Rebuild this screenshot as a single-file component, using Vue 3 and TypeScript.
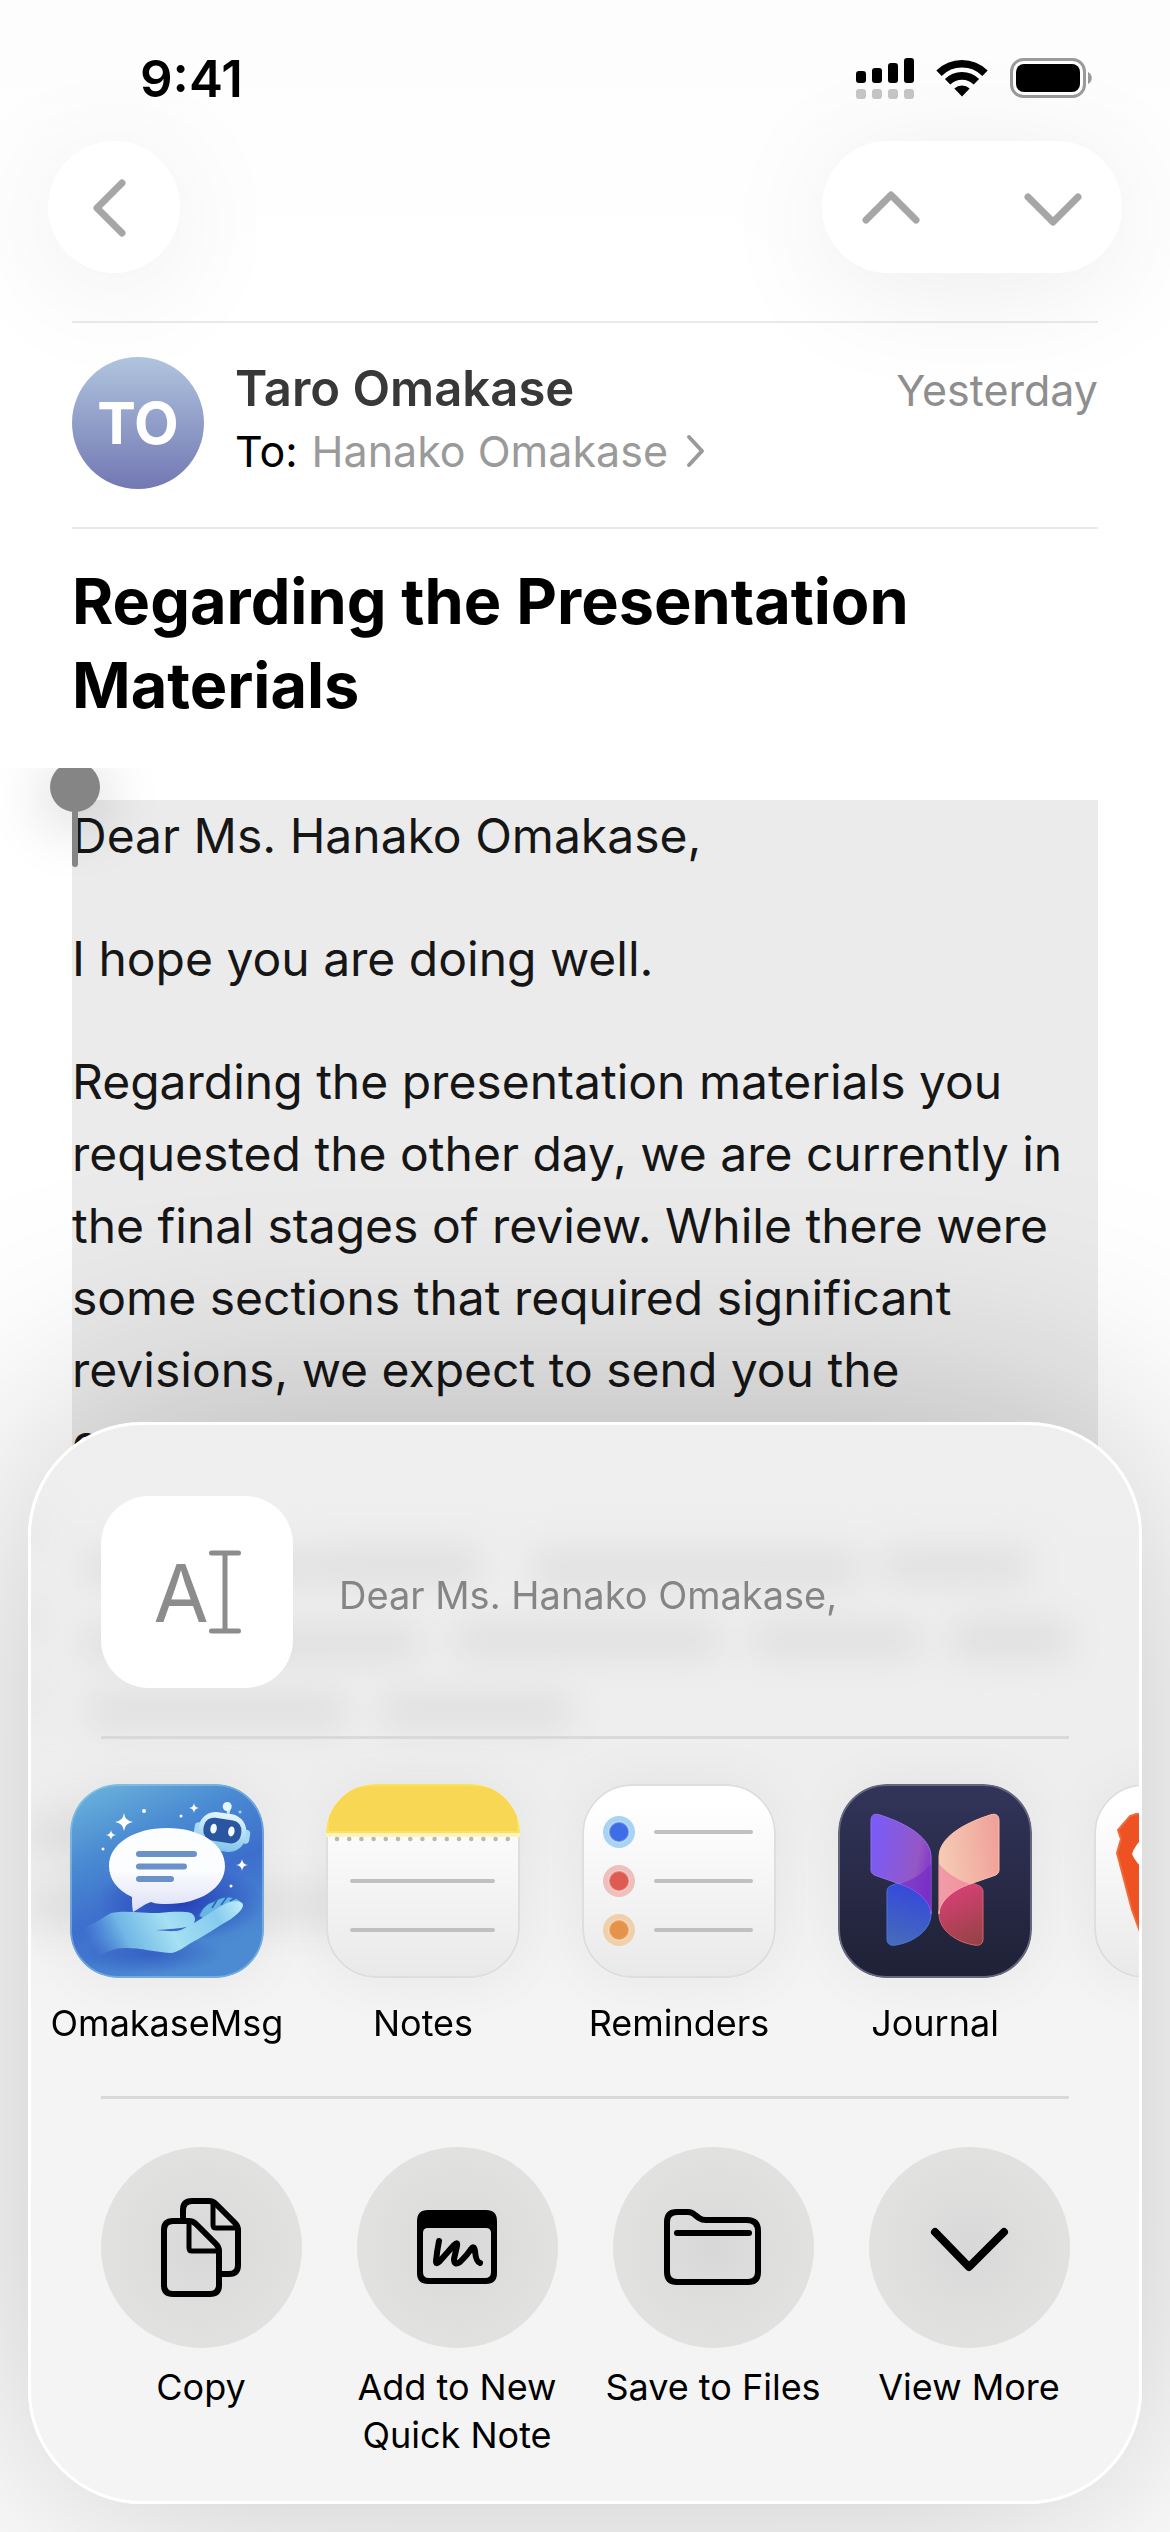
<script setup lang="ts">
type AppId = 'omakase' | 'notes' | 'reminders' | 'journal' | 'brave'
type ActionId = 'copy' | 'quicknote' | 'files' | 'more'

interface ShareApp {
  id: AppId
  label: string
}

interface ShareAction {
  id: ActionId
  label: string
}

const apps: ShareApp[] = [
  { id: 'omakase', label: 'OmakaseMsg' },
  { id: 'notes', label: 'Notes' },
  { id: 'reminders', label: 'Reminders' },
  { id: 'journal', label: 'Journal' },
  { id: 'brave', label: '' },
]

const actions: ShareAction[] = [
  { id: 'copy', label: 'Copy' },
  { id: 'quicknote', label: 'Add to New Quick Note' },
  { id: 'files', label: 'Save to Files' },
  { id: 'more', label: 'View More' },
]

const perforations: number[] = Array.from({ length: 15 }, (_, i) => 11 + i * 12.2)

const reminderRows = [
  { y: 48, halo: '#a9d3f5', core: '#3f6de8' },
  { y: 97, halo: '#efbfbd', core: '#dd5b50' },
  { y: 146, halo: '#efd0aa', core: '#e5924a' },
]
</script>

<template>
  <div class="screen">
    <header class="status">
      <span class="time">9:41</span>
      <div class="indicators">
        <svg width="58" height="41" viewBox="0 0 58 41" aria-hidden="true">
          <g fill="#000">
            <rect x="0" y="13" width="10" height="12" rx="3" />
            <rect x="16" y="10" width="10" height="15" rx="3" />
            <rect x="32" y="5" width="10" height="20" rx="3" />
            <rect x="48" y="0" width="10" height="25" rx="3" />
          </g>
          <g fill="#c6c6c6">
            <rect v-for="i in 4" :key="i" :x="(i - 1) * 16" y="31" width="10" height="10" rx="3" />
          </g>
        </svg>
        <svg width="52" height="38" viewBox="0 0 52 38" aria-hidden="true">
          <g fill="none" stroke="#000" stroke-width="7.6">
            <path d="M3 14.2A32.6 32.6 0 0 1 49 14.2" />
            <path d="M11.6 22.8A20.4 20.4 0 0 1 40.4 22.8" />
          </g>
          <path d="M26 37.5L18.3 29.6A11.2 11.2 0 0 1 33.7 29.6Z" fill="#000" />
        </svg>
        <svg class="battery" width="83" height="40" viewBox="0 0 83 40" aria-hidden="true">
          <rect x="1.5" y="1.5" width="73" height="37" rx="12" fill="none" stroke="#9a9a9a" stroke-width="3" />
          <rect x="6" y="6" width="64" height="28" rx="8" fill="#000" />
          <path d="M78 14c5 2 5 10 0 12z" fill="#9a9a9a" />
        </svg>
      </div>
    </header>

    <nav class="toolbar">
      <button class="round" type="button" aria-label="Back">
        <svg width="132" height="132" viewBox="0 0 132 132"><path d="M74 42L49 67L74 92" /></svg>
      </button>
      <div class="pill">
        <button type="button" aria-label="Previous message">
          <svg width="138" height="132" viewBox="0 0 138 132"><path d="M44 79L69 54L94 79" /></svg>
        </button>
        <button type="button" aria-label="Next message">
          <svg width="138" height="132" viewBox="0 0 138 132"><path d="M44 56L69 81L94 56" /></svg>
        </button>
      </div>
    </nav>

    <main class="mail">
      <section class="sender">
        <div class="avatar">TO</div>
        <div class="who">
          <div class="row">
            <span class="name">Taro Omakase</span>
            <span class="date">Yesterday</span>
          </div>
          <a class="to" href="#">
            <span class="to-label">To:</span>
            <span>Hanako Omakase</span>
            <svg width="26" height="34" viewBox="0 0 26 34" aria-hidden="true">
              <path d="M7 3L20 17L7 31" fill="none" stroke="#9a9a9a" stroke-width="4" stroke-linecap="round" stroke-linejoin="round" />
            </svg>
          </a>
        </div>
      </section>

      <h1>Regarding the Presentation Materials</h1>

      <div class="viewport">
        <article class="selection">
          <p>Dear Ms. Hanako Omakase,</p>
          <p>I hope you are doing well.</p>
          <p>
            Regarding the presentation materials you<br />
            requested the other day, we are currently in<br />
            the final stages of review. While there were<br />
            some sections that required significant<br />
            revisions, we expect to send you the<br />
            completed version by tomorrow
          </p>
          <span class="handle" aria-hidden="true"></span>
        </article>
      </div>
    </main>

    <section class="sheet" aria-label="Share">
      <svg class="glass" viewBox="0 0 1108 700" aria-hidden="true">
        <defs>
          <filter id="soft" x="-10%" y="-10%" width="120%" height="120%"><feGaussianBlur stdDeviation="17" /></filter>
        </defs>
        <g filter="url(#soft)" fill="#dfdfdf">
          <rect x="50" y="126" width="240" height="34" rx="12" />
          <rect x="290" y="122" width="160" height="38" rx="12" />
          <rect x="500" y="126" width="330" height="36" rx="12" />
          <rect x="850" y="124" width="150" height="34" rx="12" />
          <rect x="50" y="200" width="340" height="36" rx="12" />
          <rect x="420" y="198" width="270" height="34" rx="12" />
          <rect x="720" y="198" width="170" height="34" rx="12" />
          <rect x="920" y="194" width="120" height="40" rx="12" />
          <rect x="56" y="268" width="260" height="36" rx="12" />
          <rect x="350" y="268" width="190" height="36" rx="12" />
          <rect x="-10" y="90" width="22" height="40" opacity="0.6" />
          <rect x="-10" y="170" width="24" height="50" opacity="0.6" />
          <rect x="-10" y="250" width="22" height="40" opacity="0.6" />
          <rect x="-10" y="390" width="80" height="40" opacity="0.8" />
          <rect x="-10" y="460" width="340" height="40" opacity="0.8" />
        </g>
      </svg>

      <div class="preview">
        <div class="thumb">
          <span>A</span>
          <svg width="32" height="84" viewBox="0 0 32 84" aria-hidden="true">
            <path d="M2.500 3H29.500M2.500 81H29.500M16 3V81" fill="none" stroke="#8c8c8c" stroke-width="5" stroke-linecap="round" />
          </svg>
        </div>
        <span class="excerpt">Dear Ms. Hanako Omakase,</span>
      </div>

      <hr />

      <div class="apps">
        <button v-for="app in apps" :key="app.id" class="app" type="button" :aria-label="app.label || 'Brave'">
          <svg v-if="app.id === 'omakase'" class="icon" viewBox="0 0 194 194">
            <defs>
              <linearGradient id="sky" x1="0" y1="0" x2="0.45" y2="1">
                <stop offset="0" stop-color="#6fb8dc" />
                <stop offset="0.35" stop-color="#4a8bd2" />
                <stop offset="0.65" stop-color="#3d6ecd" />
                <stop offset="1" stop-color="#4c8bd2" />
              </linearGradient>
              <linearGradient id="hand" x1="0" y1="0.2" x2="1" y2="0">
                <stop offset="0" stop-color="#5f9fe0" stop-opacity="0" />
                <stop offset="0.22" stop-color="#70b7e6" />
                <stop offset="0.5" stop-color="#a5e0f3" />
                <stop offset="0.8" stop-color="#86cbee" />
                <stop offset="1" stop-color="#c4effa" />
              </linearGradient>
              <radialGradient id="deep"><stop offset="0" stop-color="#2440b8" /><stop offset="1" stop-color="#2440b8" stop-opacity="0" /></radialGradient>
              <linearGradient id="bubble" x1="0" y1="0" x2="0" y2="1"><stop offset="0.5" stop-color="#fcfdff" /><stop offset="1" stop-color="#dcdff4" /></linearGradient>
              <linearGradient id="head" x1="0" y1="0" x2="0" y2="1"><stop offset="0" stop-color="#e5f6fd" /><stop offset="1" stop-color="#7fc4ea" /></linearGradient>
            </defs>
            <rect width="194" height="194" rx="48" fill="url(#sky)" />
            <ellipse cx="110" cy="118" rx="84" ry="40" fill="url(#deep)" />
            <ellipse cx="80" cy="170" rx="74" ry="20" fill="url(#deep)" opacity="0.5" />
            <g transform="rotate(9 152 49)">
              <path d="M155 29V24" stroke="#c9ecfa" stroke-width="3" />
              <circle cx="153" cy="22" r="4.500" fill="#e5f6fd" />
              <rect x="124" y="42" width="8" height="14" rx="4" fill="#a5d9f2" />
              <rect x="172" y="42" width="8" height="14" rx="4" fill="#a5d9f2" />
              <rect x="128" y="29" width="48" height="38" rx="17" fill="url(#head)" />
              <rect x="133" y="35" width="38" height="23" rx="10" fill="#2a55a0" />
              <ellipse cx="143" cy="46" rx="3.200" ry="5" fill="#f2fbff" />
              <ellipse cx="161" cy="46" rx="3.200" ry="5" fill="#f2fbff" />
            </g>
            <path d="M97 44c33 0 58 16 58 38s-25 38-58 38c-6 0-11 0-16-2-7 2-12 7-18 10-1-5-1-10-1-15-15-7-23-18-23-31 0-22 25-38 58-38z" fill="url(#bubble)" />
            <path d="M69 70H124M69 82.500H114M69 95H101" stroke="#6b92c8" stroke-width="6" stroke-linecap="round" />
            <path d="M129 132c3-8 9-13 14-14 5-3 10-5 14-5 7 0 12 2 14 5l-8 8-24 12z" fill="#66b5e4" stroke="#3070c0" stroke-width="1" />
            <path d="M142 124l5-8M151 121l6-8M160 117l5-3" stroke="#2d63bb" stroke-width="1.500" />
            <path d="M6 144c14 0 24-9 35-15 14-3 30 0 48 0 12-1 24-2 32 0 6 3 5 11-1 13-10 3-22 3-34 4 10 1 18 2 25 0 17-8 32-20 46-27 8-3 16-2 16 2 0 5-6 9-12 14-14 8-28 18-42 25-7 5-13 9-19 9-15-1-29-5-43-5-16-1-28 8-46 18z" fill="url(#hand)" />
            <g fill="#fff">
              <path d="M54 29q1 8 9 9q-8 1-9 9q-1-8-9-9q8-1 9-9zM41 46q.5 4.500 5 5q-4.500.5-5 5q-.5-4.500-5-5q4.500-.5 5-5zM124 19q.5 4.500 5 5q-4.500.5-5 5q-.5-4.500-5-5q4.500-.5 5-5zM172 75q.5 5.500 6 6q-5.500.5-6 6q-.5-5.500-6-6q5.500-.5 6-6z" />
              <circle cx="74" cy="27" r="2" /><circle cx="33" cy="65" r="1.500" /><circle cx="111" cy="32" r="1.500" />
              <circle cx="161" cy="102" r="1.500" /><circle cx="170" cy="28" r="1.500" opacity="0.6" />
            </g>
            <rect x="1" y="1" width="192" height="192" rx="47" fill="none" stroke="#a7d4ee" stroke-opacity="0.45" stroke-width="2" />
          </svg>

          <svg v-else-if="app.id === 'notes'" class="icon" viewBox="0 0 194 194">
            <defs>
              <linearGradient id="paper" x1="0" y1="0" x2="0" y2="1"><stop offset="0.1" stop-color="#fff" /><stop offset="1" stop-color="#e9e9e9" /></linearGradient>
              <clipPath id="tile"><rect width="194" height="194" rx="50" /></clipPath>
            </defs>
            <rect x="1" y="1" width="192" height="192" rx="49" fill="url(#paper)" stroke="#dedede" stroke-width="2" />
            <g clip-path="url(#tile)">
              <rect width="194" height="53" fill="#fdf3bf" />
              <rect width="194" height="49" fill="#fbe25c" />
              <rect x="3" y="2" width="188" height="45" rx="46" fill="#f8d755" />
              <rect x="3" y="30" width="188" height="17" fill="#f8d755" />
            </g>
            <circle v-for="x in perforations" :key="x" :cx="x" cy="55" r="2.300" fill="#bdb9a8" />
            <path d="M26 97H167M26 146H167" stroke="#c0c0c0" stroke-width="4" stroke-linecap="round" />
          </svg>

          <svg v-else-if="app.id === 'reminders'" class="icon" viewBox="0 0 194 194">
            <rect x="1" y="1" width="192" height="192" rx="49" fill="url(#paper)" stroke="#dedede" stroke-width="2" />
            <g v-for="row in reminderRows" :key="row.y">
              <circle cx="37" :cy="row.y" r="16" :fill="row.halo" />
              <circle cx="37" :cy="row.y" r="10" :fill="row.core" stroke="#fff" stroke-opacity="0.25" stroke-width="2" />
              <path :d="`M74 ${row.y}H169`" stroke="#c0c0c0" stroke-width="4" stroke-linecap="round" />
            </g>
          </svg>

          <svg v-else-if="app.id === 'journal'" class="icon" viewBox="0 0 194 194">
            <defs>
              <linearGradient id="night" x1="0" y1="0" x2="0" y2="1"><stop offset="0" stop-color="#32345a" /><stop offset="1" stop-color="#1f2136" /></linearGradient>
              <linearGradient id="violet" x1="0" y1="0.3" x2="1" y2="0.6"><stop offset="0" stop-color="#7a5cf8" /><stop offset="0.75" stop-color="#9457c4" /><stop offset="1" stop-color="#8434c8" /></linearGradient>
              <linearGradient id="peach" x1="0" y1="0.5" x2="1" y2="0.3"><stop offset="0" stop-color="#f5cdb5" /><stop offset="1" stop-color="#f0a199" /></linearGradient>
              <linearGradient id="blue" x1="0.5" y1="0" x2="0.3" y2="1"><stop offset="0" stop-color="#3547dd" /><stop offset="1" stop-color="#466bba" /></linearGradient>
              <linearGradient id="crimson" x1="0.4" y1="0" x2="0.7" y2="1"><stop offset="0" stop-color="#db3f78" /><stop offset="1" stop-color="#974345" /></linearGradient>
            </defs>
            <rect x="1" y="1" width="192" height="192" rx="48" fill="url(#night)" stroke="#65677f" stroke-width="2" />
            <path d="M55 101C58 99 62 99 66 101C82 105 93 114 93 130C93 146 76 158 58 161C52 162 49 160 49 155V108C49 104 51 102 55 101Z" fill="url(#blue)" stroke="#4a76de" />
            <path d="M33 37C33 31 36 29 42 31C70 40 93 54 93 73V130C93 118 80 106 62 100L39 92C35 91 33 89 33 86Z" fill="url(#violet)" stroke="#966bf2" />
            <path d="M62 100C77 95 86 88 93 80V130C93 118 80 106 62 100Z" fill="#742bc8" opacity="0.65" />
            <path d="M139 101C136 99 132 99 128 101C112 105 101 114 101 130C101 146 118 158 136 161C142 162 145 160 145 155V108C145 104 143 102 139 101Z" fill="url(#crimson)" stroke="#d5646c" />
            <path d="M161 37C161 31 158 29 152 31C124 40 101 54 101 73V130C101 118 114 106 132 100L155 92C159 91 161 89 161 86Z" fill="url(#peach)" stroke="#ffc0ae" />
            <path d="M132 100C117 95 108 88 101 80V130C101 118 114 106 132 100Z" fill="#f0789c" opacity="0.6" />
          </svg>

          <svg v-else class="icon" viewBox="0 0 194 194">
            <rect x="1" y="1" width="192" height="192" rx="49" fill="url(#paper)" stroke="#dedede" stroke-width="2" />
            <path d="M42 30H152L170 46L167 55L171 69L150 140L97 176L48 153L38 126L23 69L27 55L24 46L36 32Z" fill="#ee5223" stroke="#f06a3c" stroke-width="2" />
            <path d="M54 48Q40 62 38 70Q41 78 54 90H140V48Z" fill="#fff" />
          </svg>
          <span>{{ app.label }}</span>
        </button>
      </div>

      <hr />

      <div class="actions">
        <button v-for="action in actions" :key="action.id" class="action" type="button">
          <svg class="disc" viewBox="0 0 201 201" aria-hidden="true">
            <g v-if="action.id === 'copy'" fill="none" stroke="#000" stroke-width="6" stroke-linejoin="round">
              <path d="M82 71V63Q82 54 91 54H108Q112 54 115 57L134 76Q137 79 137 83V118Q137 127 128 127H121" />
              <path d="M112 54V78Q112 81 115 81H137" stroke-width="5" />
              <path d="M72 74H88Q92 74 95 77L115 97Q118 100 118 104V138Q118 147 109 147H72Q63 147 63 138V83Q63 74 72 74Z" />
              <path d="M88 74V101Q88 104 91 104H118" stroke-width="5" />
            </g>
            <g v-else-if="action.id === 'quicknote'">
              <path fill-rule="evenodd" d="M71 63H129Q140 63 140 74V126Q140 137 129 137H71Q60 137 60 126V74Q60 63 71 63ZM71 81Q66 81 66 86V125Q66 131 72 131H128Q134 131 134 125V86Q134 81 129 81Z" />
              <path d="M82 94Q80 104 79 114Q79 118 82 115L97 98Q101 94 100 99L97 112Q97 119 103 115Q111 107 114 102Q117 98 118 104Q119 115 123 116" fill="none" stroke="#000" stroke-width="6" stroke-linecap="round" stroke-linejoin="round" />
            </g>
            <g v-else-if="action.id === 'files'" fill="none" stroke="#000" stroke-width="6" stroke-linejoin="round">
              <path d="M64 65H75Q79 65 82 68L86 71Q89 73 93 73H134Q145 73 145 84V125Q145 135 135 135H64Q54 135 54 125V75Q54 65 64 65Z" />
              <path d="M64 86H136" stroke-linecap="round" />
            </g>
            <path v-else d="M66 85L100 120L135 85" fill="none" stroke="#000" stroke-width="8" stroke-linecap="round" stroke-linejoin="round" />
          </svg>
          <span>{{ action.label }}</span>
        </button>
      </div>
    </section>
  </div>
</template>

<style>
body {
  margin: 0;
  background: #fff;
}
</style>

<style scoped>
.screen {
  position: relative;
  min-height: 100vh;
  overflow: hidden;
  background: linear-gradient(#fdfdfd, #fff 300px);
  color: #000;
  font-family: Inter, "Noto Sans", sans-serif;
}

button {
  margin: 0;
  padding: 0;
  border: 0;
  background: none;
  color: inherit;
  font: inherit;
}

svg {
  display: block;
  flex: none;
}

.status {
  display: flex;
  justify-content: space-between;
  align-items: center;
  height: 156px;
  padding: 0 77px 0 140px;
}

.time {
  font-size: 51px;
  font-weight: 600;
}

.indicators {
  display: flex;
  align-items: center;
  gap: 22px;
}

.toolbar {
  display: flex;
  justify-content: space-between;
  margin-top: -15px;
  padding: 0 48px;
}

.toolbar path {
  fill: none;
  stroke: #a6a6a6;
  stroke-width: 7px;
  stroke-linecap: round;
  stroke-linejoin: round;
}

.round,
.pill {
  border-radius: 66px;
  background: #fff;
  box-shadow: 0 16px 120px rgba(0, 0, 0, 0.08);
}

.pill {
  display: flex;
  justify-content: space-between;
  width: 300px;
}

.mail {
  padding: 48px 72px 0;
}

.sender {
  display: flex;
  gap: 31px;
  padding: 34px 0 38px;
  border-top: 2px solid #eaeaea;
  border-bottom: 2px solid #eaeaea;
}

.avatar {
  display: grid;
  place-items: center;
  flex: none;
  width: 132px;
  height: 132px;
  border-radius: 50%;
  background: linear-gradient(#b0c4de, #7278b3);
  color: #fff;
  font-size: 58px;
  font-weight: 700;
}

.who {
  flex: 1;
}

.row {
  display: flex;
  justify-content: space-between;
  align-items: baseline;
  line-height: 64px;
}

.name {
  color: #383838;
  font-size: 49px;
  font-weight: 600;
}

.date {
  color: #8e8e8e;
  font-size: 43px;
}

.to {
  display: flex;
  align-items: center;
  gap: 14px;
  color: #9a9a9a;
  font-size: 43px;
  line-height: 58px;
  text-decoration: none;
}

.to-label {
  color: #000;
}

h1 {
  margin: 30px 0 41px;
  font-size: 63px;
  font-weight: 700;
  line-height: 84px;
}

.viewport {
  margin: 0 -72px;
  padding: 32px 72px 0;
  overflow: hidden;
}

.selection {
  position: relative;
  background: #ebebeb;
  color: #161616;
  font-size: 48px;
  line-height: 72px;
}

.selection p {
  margin: 0 0 51px;
  white-space: nowrap;
}

.handle {
  position: absolute;
  top: -38px;
  left: -22px;
  width: 50px;
  height: 50px;
  border-radius: 50%;
  background: #858585;
  box-shadow: 0 10px 60px rgba(0, 0, 0, 0.25);
}

.handle::after {
  content: "";
  position: absolute;
  top: 48px;
  left: 22px;
  width: 6px;
  height: 57px;
  border-radius: 3px;
  background: #858585;
}

.sheet {
  position: absolute;
  right: 28px;
  bottom: 28px;
  left: 28px;
  overflow: hidden;
  box-sizing: border-box;
  padding-top: 71px;
  border: 3px solid #fff;
  border-radius: 114px;
  background: linear-gradient(#efefef, #eee 35%, #f4f4f4 55%, #f4f4f4);
  box-shadow: 0 0 500px rgba(0, 0, 0, 0.25);
}

.glass {
  position: absolute;
  top: 0;
  left: 0;
  width: 100%;
}

.preview,
.apps,
.actions {
  position: relative;
  display: flex;
}

.preview {
  align-items: center;
  gap: 46px;
  padding: 0 70px;
}

.thumb {
  display: flex;
  justify-content: center;
  align-items: center;
  width: 192px;
  height: 192px;
  border-radius: 48px;
  background: #fff;
  color: #8c8c8c;
  font-size: 80px;
  font-weight: 400;
}

.excerpt {
  padding-top: 6px;
  color: #858585;
  font-size: 38px;
  line-height: 48px;
}

hr {
  position: relative;
  height: 3px;
  margin: 48px 70px 45px;
  border: 0;
  background: #d9d9d9;
}

.apps {
  padding-left: 8px;
}

.app,
.action {
  display: flex;
  flex: none;
  flex-direction: column;
  align-items: center;
  width: 256px;
  min-height: 264px;
  font-size: 36px;
  line-height: 48px;
}

.app {
  gap: 21px;
}

.icon {
  width: 194px;
  height: 194px;
  border-radius: 48px;
  box-shadow: 0 0 60px rgba(0, 0, 0, 0.05);
}

.actions {
  padding: 3px 42px 42px;
}

.action {
  gap: 15px;
  min-height: 312px;
}

.action span {
  width: 220px;
}

.disc {
  width: 201px;
  height: 201px;
  border-radius: 50%;
  background: radial-gradient(#d8d8d8, #e1e1e0 62%);
}
</style>
